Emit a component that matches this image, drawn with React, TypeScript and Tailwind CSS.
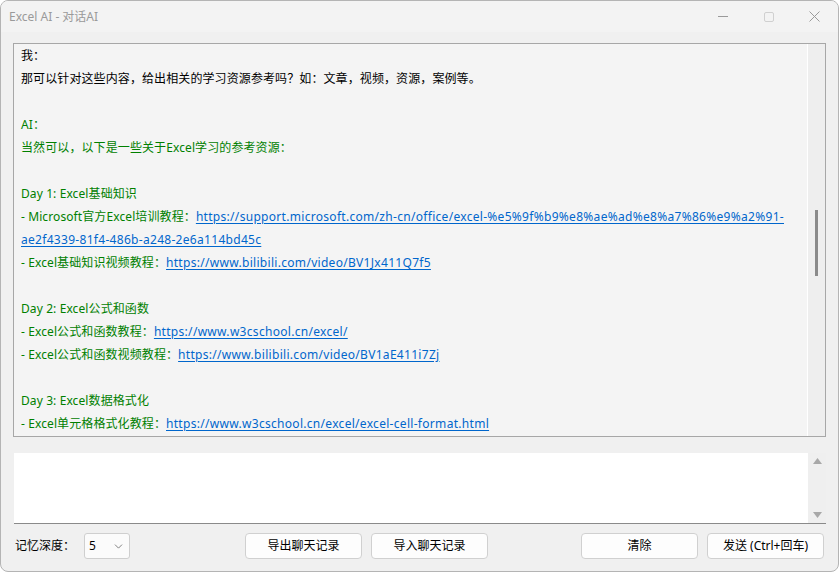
import { ChevronDown } from "lucide-react";

const font = "font-['Noto_Sans','Noto_Sans_CJK_SC',sans-serif]";

const Link = ({ children }: { children: React.ReactNode }) => (
  <span className="text-[#0066cc] underline underline-offset-2 tracking-[0.3px]">{children}</span>
);

const Btn = ({ label, className = "" }: { label: string; className?: string }) => (
  <button
    type="button"
    className={`h-[26px] w-[117px] shrink-0 rounded-[4px] border border-[#d0d0d0] bg-[#fdfdfd] text-[12px] text-black ${className}`}
  >
    {label}
  </button>
);

const App = () => {
  return (
    <div className={`h-[574px] w-[839px] bg-white ${font}`}>
      <div className="flex h-[572px] w-[839px] flex-col overflow-hidden rounded-lg border border-[#b4b4b4] bg-[#f0f0f0]">
        {/* title bar */}
        <div className="flex h-[31px] shrink-0 items-center bg-[#f3f3f3]">
          <span className="pl-[8px] text-[12px] text-[#9a9a9a]">Excel AI - 对话AI</span>
          <div className="ml-auto flex h-full items-center">
            <div className="flex w-[46px] justify-center">
              <div className="h-px w-[10px] bg-[#9a9a9a]" />
            </div>
            <div className="flex w-[46px] justify-center">
              <div className="h-[10px] w-[10px] rounded-[2px] border border-[#d0d0d0]" />
            </div>
            <div className="flex w-[46px] justify-center pr-[2px]">
              <svg width="11" height="11" viewBox="0 0 11 11">
                <path d="M0.5 0.5L10.5 10.5M10.5 0.5L0.5 10.5" stroke="#9a9a9a" strokeWidth="1" />
              </svg>
            </div>
          </div>
        </div>

        <div className="flex flex-1 flex-col px-[12px] pt-[11px]">
          {/* chat display */}
          <div className="flex h-[394px] border border-[#a7a7a7] bg-[#f4f4f4]">
            <div className="flex-1 overflow-hidden whitespace-nowrap pl-[7px] text-[12px] leading-[23px] tracking-[0.1px]">
              <div className="text-black">
                <div>我：</div>
                <div>那可以针对这些内容，给出相关的学习资源参考吗？如：文章，视频，资源，案例等。</div>
                <div>&nbsp;</div>
              </div>
              <div className="text-[#008000]">
                <div>AI：</div>
                <div>当然可以，以下是一些关于Excel学习的参考资源：</div>
                <div>&nbsp;</div>
                <div>Day 1: Excel基础知识</div>
                <div>
                  - Microsoft官方Excel培训教程：
                  <Link>https://support.microsoft.com/zh-cn/office/excel-%e5%9f%b9%e8%ae%ad%e8%a7%86%e9%a2%91-</Link>
                </div>
                <div>
                  <Link>ae2f4339-81f4-486b-a248-2e6a114bd45c</Link>
                </div>
                <div>
                  - Excel基础知识视频教程：<Link>https://www.bilibili.com/video/BV1Jx411Q7f5</Link>
                </div>
                <div>&nbsp;</div>
                <div>Day 2: Excel公式和函数</div>
                <div>
                  - Excel公式和函数教程：<Link>https://www.w3cschool.cn/excel/</Link>
                </div>
                <div>
                  - Excel公式和函数视频教程：<Link>https://www.bilibili.com/video/BV1aE411i7Zj</Link>
                </div>
                <div>&nbsp;</div>
                <div>Day 3: Excel数据格式化</div>
                <div>
                  - Excel单元格格式化教程：<Link>https://www.w3cschool.cn/excel/excel-cell-format.html</Link>
                </div>
              </div>
            </div>
            {/* scrollbar */}
            <div className="w-[18px] shrink-0 border-l border-white bg-[#eeeeee] pt-[166px]">
              <div className="mx-auto h-[66px] w-[3px] bg-[#8a8a8a]" />
            </div>
          </div>

          {/* input */}
          <div className="mt-[16px] ml-px flex h-[71px] border-b border-[#8a8a8a] bg-white">
            <div className="flex-1" />
            <div className="flex w-[18px] flex-col items-center justify-between bg-[#efefef] py-[5px]">
              <svg width="9" height="6" viewBox="0 0 9 6">
                <path d="M4.5 0L9 6H0z" fill="#a8a8a8" />
              </svg>
              <svg width="9" height="6" viewBox="0 0 9 6">
                <path d="M0 0H9L4.5 6z" fill="#a8a8a8" />
              </svg>
            </div>
          </div>

          {/* bottom row */}
          <div className="mt-[9px] flex items-center text-[12px] text-black">
            <span className="w-[56px] shrink-0 whitespace-nowrap pl-[2px]">记忆深度：</span>
            <div className="ml-[15px] flex h-[26px] w-[46px] shrink-0 items-center justify-between rounded-[3px] border border-[#cfcfcf] bg-[#fbfbfb] pl-[4px] pr-[4px]">
              <span>5</span>
              <ChevronDown size={13} strokeWidth={1.5} className="text-[#666]" />
            </div>
            <Btn label="导出聊天记录" className="ml-[115px]" />
            <Btn label="导入聊天记录" className="ml-[9px]" />
            <Btn label="清除" className="ml-[93px]" />
            <Btn label="发送 (Ctrl+回车)" className="ml-[9px]" />
          </div>
        </div>
      </div>
    </div>
  );
};

export default App;
